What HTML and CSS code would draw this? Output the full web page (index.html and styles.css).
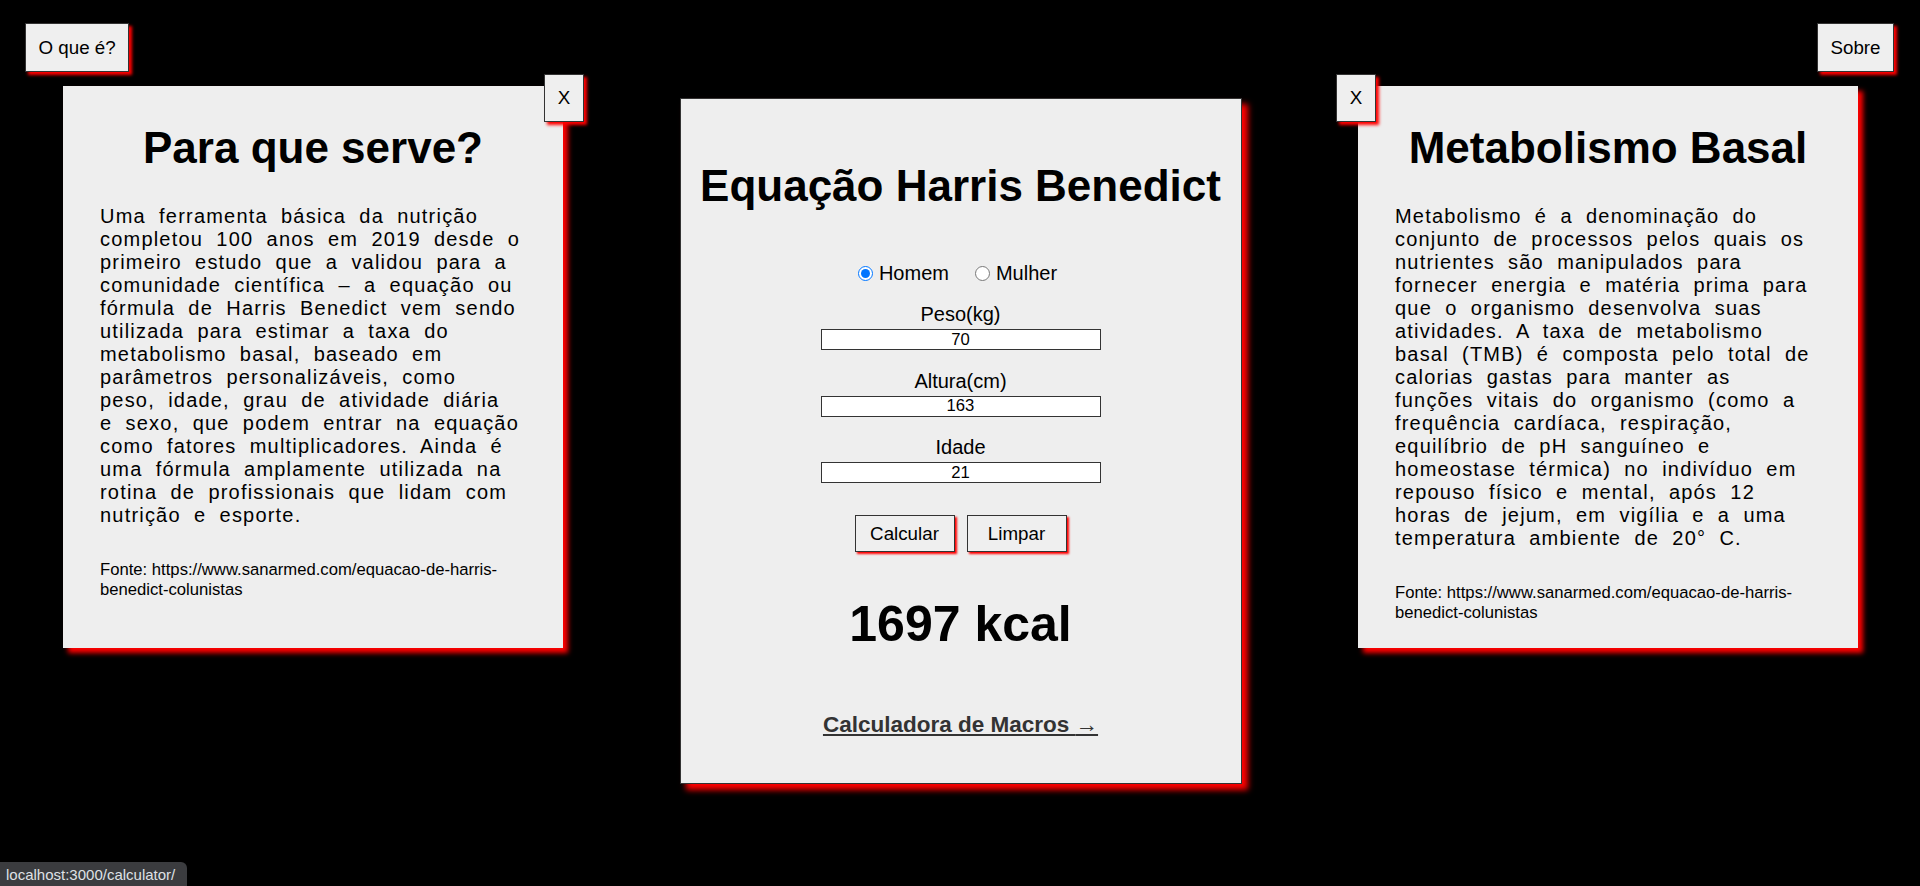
FILE: index.html
```html
<!DOCTYPE html>
<html lang="pt-BR">
<head>
<meta charset="utf-8">
<title>Equação Harris Benedict</title>
<link rel="stylesheet" href="styles.css">
</head>
<body>
<header class="topbar">
  <button class="btn btn-top">O que é?</button>
  <button class="btn btn-top">Sobre</button>
</header>
<main class="stage">
  <section class="info-panel">
    <button class="btn btn-close btn-close-right">X</button>
    <h1 class="panel-title">Para que serve?</h1>
    <p class="panel-text">Uma ferramenta básica da nutrição completou 100 anos em 2019 desde o primeiro estudo que a validou para a comunidade científica – a equação ou fórmula de Harris Benedict vem sendo utilizada para estimar a taxa do metabolismo basal, baseado em parâmetros personalizáveis, como peso, idade, grau de atividade diária e sexo, que podem entrar na equação como fatores multiplicadores. Ainda é uma fórmula amplamente utilizada na rotina de profissionais que lidam com nutrição e esporte.</p>
    <p class="panel-source">Fonte: https://www.sanarmed.com/equacao-de-harris-benedict-colunistas</p>
  </section>

  <section class="calc-panel">
    <h1 class="calc-title">Equação Harris Benedict</h1>
    <div class="sex-row">
      <label class="radio-label"><input class="radio" type="radio" name="sexo" checked><span>Homem</span></label>
      <label class="radio-label"><input class="radio" type="radio" name="sexo"><span>Mulher</span></label>
    </div>
    <div class="field">
      <label class="field-label">Peso(kg)</label>
      <input class="field-input" type="text" value="70">
    </div>
    <div class="field">
      <label class="field-label">Altura(cm)</label>
      <input class="field-input" type="text" value="163">
    </div>
    <div class="field">
      <label class="field-label">Idade</label>
      <input class="field-input" type="text" value="21">
    </div>
    <div class="actions">
      <button class="btn btn-action">Calcular</button>
      <button class="btn btn-action">Limpar</button>
    </div>
    <div class="result">1697 kcal</div>
    <a class="macro-link" href="#">Calculadora de Macros <span class="arrow">→</span></a>
  </section>

  <section class="info-panel">
    <button class="btn btn-close btn-close-left">X</button>
    <h1 class="panel-title">Metabolismo Basal</h1>
    <p class="panel-text">Metabolismo é a denominação do conjunto de processos pelos quais os nutrientes são manipulados para fornecer energia e matéria prima para que o organismo desenvolva suas atividades. A taxa de metabolismo basal (TMB) é composta pelo total de calorias gastas para manter as funções vitais do organismo (como a frequência cardíaca, respiração, equilíbrio de pH sanguíneo e homeostase térmica) no indivíduo em repouso físico e mental, após 12 horas de jejum, em vigília e a uma temperatura ambiente de 20° C.</p>
    <p class="panel-source">Fonte: https://www.sanarmed.com/equacao-de-harris-benedict-colunistas</p>
  </section>
</main>
<div class="status-bubble">localhost:3000/calculator/</div>
</body>
</html>
```

FILE: styles.css
```css
* { box-sizing: border-box; }

html, body {
  margin: 0;
  padding: 0;
  background: #000;
  font-family: "Liberation Sans", Arial, sans-serif;
  color: #000;
}

body {
  min-height: 886px;
}

.btn {
  font-family: "Liberation Sans", Arial, sans-serif;
  font-size: 18.75px;
  line-height: 21.5px;
  color: #000;
  background: #efefef;
  border: 1px solid #333;
  border-radius: 0;
  margin: 0;
  cursor: pointer;
}

.topbar {
  display: flex;
  justify-content: space-between;
  align-items: flex-start;
  padding: 23px 26px 0 25px;
}

.btn-top {
  padding: 12.5px 12.5px;
  box-shadow: 3px 3px 3px #ff0000;
}

.stage {
  display: flex;
  justify-content: space-between;
  align-items: flex-start;
  padding: 0 62px 0 63px;
  margin-top: 14px;
}

.info-panel {
  position: relative;
  width: 500px;
  height: 562px;
  background: #eeeeee;
  padding-top: 37px;
  box-shadow: 5px 5px 5px #ff0000;
}

.btn-close {
  position: absolute;
  top: -12px;
  width: 40px;
  height: 48px;
  padding: 0;
  z-index: 2;
  box-shadow: 3px 3px 3px #ff0000;
}

.btn-close-right { right: -21px; }
.btn-close-left { left: -22px; }

.panel-title {
  margin: 0;
  font-size: 44px;
  font-weight: 700;
  line-height: normal;
  text-align: center;
}

.panel-text {
  margin: 32px 42px 0 37px;
  font-size: 20px;
  line-height: 23px;
  letter-spacing: 1.2px;
  word-spacing: 6.5px;
}

.panel-source {
  margin: 33px 42px 0 37px;
  font-size: 16.67px;
  line-height: normal;
}

.calc-panel {
  width: 562px;
  height: 686px;
  margin-top: 12px;
  background: #eeeeee;
  border: 1px solid #333;
  box-shadow: 6px 6px 6px #ff0000;
  padding-top: 62.8px;
  display: flex;
  flex-direction: column;
  align-items: center;
}

.calc-title {
  margin: 0;
  font-size: 44px;
  font-weight: 700;
  line-height: normal;
  text-align: center;
}

.sex-row {
  margin-top: 50.7px;
  display: flex;
  align-items: center;
  gap: 26px;
  padding-right: 6px;
  font-size: 20px;
  line-height: 23px;
}

.radio-label {
  display: flex;
  align-items: center;
  gap: 6px;
}

.radio {
  width: 15px;
  height: 15px;
  margin: 0;
}

.field {
  margin-top: 18.4px;
  display: flex;
  flex-direction: column;
  align-items: center;
}

.field + .field {
  margin-top: 19.5px;
}

.field-label {
  font-size: 20px;
  line-height: 23px;
}

.field-input {
  margin-top: 3px;
  width: 280px;
  height: 21px;
  padding: 0;
  border: 1px solid #333;
  background: #fff;
  font-family: "Liberation Sans", Arial, sans-serif;
  font-size: 16.67px;
  text-align: center;
  color: #000;
}

.actions {
  margin-top: 32px;
  display: flex;
  gap: 12px;
}

.btn-action {
  width: 100px;
  height: 37px;
  padding: 0;
  box-shadow: 2px 2px 2px #ff0000;
}

.result {
  margin-top: 43px;
  font-size: 50px;
  font-weight: 700;
  line-height: normal;
}

.macro-link {
  margin-top: 59px;
  font-size: 22.5px;
  font-weight: 700;
  line-height: normal;
  color: #333;
  text-decoration: underline;
}

.arrow {
  font-weight: 400;
}

.status-bubble {
  position: fixed;
  left: 0;
  bottom: 0;
  height: 24px;
  padding: 3px 12px 0 6px;
  background: #3b3c3f;
  color: #dfe1e5;
  font-family: "Liberation Sans", Arial, sans-serif;
  font-size: 15px;
  line-height: 19px;
  border-top-right-radius: 6px;
}
```
